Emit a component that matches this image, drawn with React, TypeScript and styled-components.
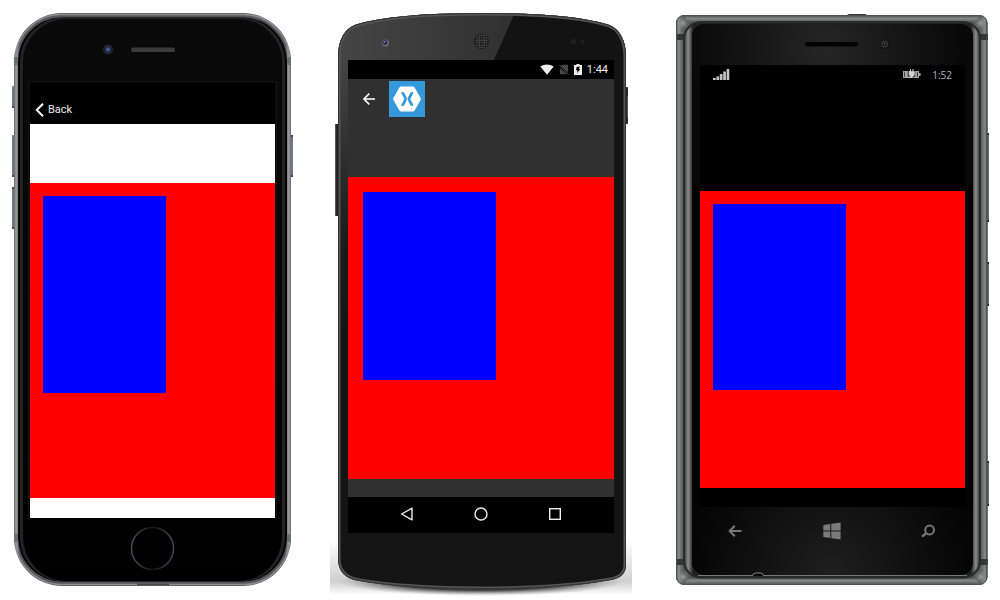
import React from "react";
import styled, { createGlobalStyle } from "styled-components";

const GlobalStyle = createGlobalStyle`
  *, *::before, *::after { box-sizing: border-box; }
  body { margin: 0; background: #fff; }
`;

const Gallery = styled.main`
  display: flex;
  flex-wrap: wrap;
  justify-content: space-between;
  padding: 0 10px 0 12px;
  overflow: hidden;
`;

const Device = styled.article<{ $width: number; $pad: string }>`
  position: relative;
  flex: 0 0 auto;
  width: ${(p) => p.$width}px;
  min-height: 600px;
  padding: ${(p) => p.$pad};
`;

const Shell = styled.svg`
  position: absolute;
  inset: 0;
  width: 100%;
  height: 600px;
`;

const Screen = styled.div<{ $background: string }>`
  position: relative;
  display: flex;
  flex-direction: column;
  background: ${(p) => p.$background};
`;

const IosNav = styled.header`
  display: flex;
  align-items: flex-end;
  height: 41px;
  padding: 0 5px 6px;
  background: #000;
`;

const IconButton = styled.button<{ $size: number }>`
  display: grid;
  place-items: center;
  width: ${(p) => p.$size}px;
  height: ${(p) => p.$size}px;
  padding: 0;
  border: 0;
  background: none;
  cursor: pointer;

  svg { display: block; }
`;

const BackButton = styled.button`
  display: flex;
  align-items: center;
  gap: 4px;
  padding: 0;
  border: 0;
  background: none;
  color: #eee;
  font: 400 11px/16px Roboto, "Liberation Sans", sans-serif;
  cursor: pointer;
`;

const StatusBar = styled.div<{ $height: number }>`
  display: flex;
  align-items: center;
  height: ${(p) => p.$height}px;
  background: #000;
`;

const AndroidStatus = styled(StatusBar)`
  justify-content: flex-end;
  gap: 5px;
  padding-right: 6px;
`;

const WindowsStatus = styled(StatusBar)`
  padding: 0 13px;
`;

const AndroidTime = styled.time`
  color: #eee;
  font: 400 11px/16px Roboto, sans-serif;
`;

const WindowsTime = styled.time`
  margin-left: 11px;
  color: #b5b5b5;
  font: 400 10px/16px "Open Sans", sans-serif;
`;

const Spring = styled.span`
  flex: 1;
`;

const ActionBar = styled.header`
  display: flex;
  align-items: center;
  gap: 8px;
  height: 40px;
  padding-left: 9px;
`;

const Gap = styled.div<{ $height: number }>`
  height: ${(p) => p.$height}px;
`;

const RedBox = styled.section<{ $height: number; $pad: number }>`
  height: ${(p) => p.$height}px;
  padding: ${(p) => p.$pad}px;
  background: #f00;
`;

const BlueBox = styled.div<{ $height: number; $width: number }>`
  width: ${(p) => p.$width}px;
  height: ${(p) => p.$height}px;
  background: #00f;
`;

const AndroidKeys = styled.nav`
  display: flex;
  align-items: center;
  justify-content: center;
  gap: 50px;
  height: 36px;
  padding-bottom: 2px;
  background: #000;
`;

const WindowsKeys = styled.nav`
  position: relative;
  display: flex;
  align-items: center;
  justify-content: space-between;
  height: 48px;
  padding: 0 25px 0 23px;
`;

const HomeRow = styled.div`
  position: relative;
  display: flex;
  justify-content: center;
  padding-top: 8px;
`;

function IphoneShell() {
  return (
    <Shell viewBox="12 0 282 600" aria-hidden="true">
      <defs>
        <linearGradient id="iosRim" x1="0" y1="0" x2="1" y2="0">
          <stop offset="0" stopColor="#5d5d63" />
          <stop offset=".009" stopColor="#99999f" />
          <stop offset=".02" stopColor="#55555a" />
          <stop offset=".98" stopColor="#55555a" />
          <stop offset=".991" stopColor="#99999f" />
          <stop offset="1" stopColor="#5d5d63" />
        </linearGradient>
        <linearGradient id="iosFace" x1="0" y1="0" x2="0" y2="1">
          <stop offset="0" stopColor="#0a0a0a" />
          <stop offset="1" stopColor="#000" />
        </linearGradient>
        <radialGradient id="iosLens">
          <stop offset="0" stopColor="#6078b8" />
          <stop offset=".5" stopColor="#253462" />
          <stop offset=".75" stopColor="#18191d" />
          <stop offset="1" stopColor="#39393b" />
        </radialGradient>
      </defs>
      <g fill="#77777e">
        <rect x="12" y="86" width="4" height="22" rx="1" />
        <rect x="12" y="135" width="4" height="42" rx="1" />
        <rect x="12" y="187" width="4" height="42" rx="1" />
        <rect x="289" y="135" width="4" height="42" rx="1" />
      </g>
      <path fill="#44444a" d="M12 106h3v2h-3zM12 175h3v2h-3zM12 187h3v2h-3zM12 227h3v2h-3zM290 135h3v2h-3zM290 175h3v2h-3z" />
      <rect x="14" y="13" width="277" height="573" rx="48" fill="url(#iosRim)" />
      <rect x="15.500" y="14.500" width="274" height="570" rx="46" fill="none" stroke="#8e8e95" strokeWidth="1.500" />
      <path d="M14 57h4v8h-4zM287 57h4v8h-4zM14 534h4v8h-4zM287 534h4v8h-4z" fill="#68716f" />
      <rect x="18" y="17.500" width="269" height="564" rx="44" fill="#050505" />
      <rect x="21.500" y="19" width="262" height="561" rx="43" fill="none" stroke="#232323" strokeWidth="3" />
      <rect x="24" y="19" width="257" height="562" rx="42" fill="url(#iosFace)" />
      <path d="M28.500 518V81.500H276.500V518" fill="none" stroke="#131313" />
      <circle cx="108" cy="49.500" r="4.800" fill="url(#iosLens)" />
      <rect x="131" y="47.500" width="44" height="4.500" rx="2.200" fill="#3b3b3b" />
      <path d="M137 584.500h32" stroke="#48484a" strokeWidth="1.500" />
    </Shell>
  );
}

function NexusShell() {
  const body =
    "M338 58Q338 31 356 24.500Q394 13 482 13Q570 13 608 24.500Q626 31 626 58V566Q625 579 607 580.500Q560 589 482 589Q404 589 357 580.500Q339 577 338 560Z";
  return (
    <Shell viewBox="330 0 302 600" aria-hidden="true">
      <defs>
        <linearGradient id="nexFace" x1="0" y1="0" x2="1" y2="0">
          <stop offset="0" stopColor="#454545" />
          <stop offset="1" stopColor="#303030" />
        </linearGradient>
        <linearGradient id="nexFade" x1="0" y1="0" x2="0" y2="1">
          <stop offset="0" stopColor="#151515" stopOpacity="0" />
          <stop offset=".7" stopColor="#151515" stopOpacity=".9" />
          <stop offset="1" stopColor="#151515" />
        </linearGradient>
        <radialGradient id="nexShadow">
          <stop offset="0" stopColor="#000" />
          <stop offset=".6" stopColor="#222" stopOpacity=".85" />
          <stop offset="1" stopColor="#888" stopOpacity="0" />
        </radialGradient>
        <linearGradient id="nexGlow" x1="0" y1="0" x2="0" y2="1">
          <stop offset="0" stopColor="#bbb" stopOpacity="0" />
          <stop offset=".75" stopColor="#bbb" stopOpacity=".7" />
          <stop offset="1" stopColor="#bbb" stopOpacity="0" />
        </linearGradient>
        <pattern id="nexMesh" width="2.400" height="2.400" patternUnits="userSpaceOnUse">
          <rect width="2.400" height="2.400" fill="#444" />
          <rect width="1.400" height="1.400" fill="#080808" />
        </pattern>
        <clipPath id="nexClip">
          <path d={body} />
        </clipPath>
      </defs>
      <rect x="330" y="540" width="302" height="55" fill="url(#nexGlow)" />
      <ellipse cx="481" cy="582" rx="142" ry="14" fill="url(#nexShadow)" />
      <rect x="335" y="124" width="5" height="92" rx="1" fill="#262626" />
      <path d="M335.500 125v90" stroke="#555" />
      <rect x="624" y="87" width="4" height="37" rx="1" fill="#262626" />
      <path d="M627.500 96v22" stroke="#555" />
      <path d={body} fill="#141414" />
      <g clipPath="url(#nexClip)">
        <path d="M338 13H515L494 60L482 76V330H338Z" fill="url(#nexFace)" />
        <path d="M338 60H482V330H338Z" fill="url(#nexFade)" />
        <path d="M513 17L494 60H626V13H513Z" fill="#131313" />
        <path d={body} fill="none" stroke="#555" strokeWidth="5" />
        <path d={body} fill="none" stroke="#343434" strokeWidth="2" />
      </g>
      <circle cx="385.500" cy="43" r="3.500" fill="#6c6c70" />
      <circle cx="385" cy="42.500" r="2.300" fill="#252040" />
      <circle cx="384.500" cy="42" r="1" fill="#7c78d0" />
      <circle cx="481.500" cy="41.500" r="7.300" fill="url(#nexMesh)" stroke="#202020" />
      <circle cx="573.500" cy="41.500" r="2.700" fill="#202020" />
      <circle cx="582.500" cy="41.500" r="2" fill="#202020" />
    </Shell>
  );
}

function LumiaShell() {
  return (
    <Shell viewBox="668 0 322 600" aria-hidden="true">
      <defs>
        <linearGradient id="lumRim" x1="0" y1="0" x2="1" y2="0">
          <stop offset="0" stopColor="#3c3f3e" />
          <stop offset=".008" stopColor="#8a8c8b" />
          <stop offset=".016" stopColor="#6a6e6c" />
          <stop offset=".026" stopColor="#515553" />
          <stop offset=".974" stopColor="#515553" />
          <stop offset=".984" stopColor="#6a6e6c" />
          <stop offset=".992" stopColor="#8a8c8b" />
          <stop offset="1" stopColor="#3c3f3e" />
        </linearGradient>
        <linearGradient id="lumBezel" x1="0" y1="0" x2="1" y2="0">
          <stop offset="0" stopColor="#303030" />
          <stop offset=".014" stopColor="#8c8c8c" />
          <stop offset=".03" stopColor="#222" />
          <stop offset=".97" stopColor="#222" />
          <stop offset=".986" stopColor="#8c8c8c" />
          <stop offset="1" stopColor="#303030" />
        </linearGradient>
        <linearGradient id="lumTop" x1="0" y1="0" x2="0" y2="1">
          <stop offset="0" stopColor="#454847" />
          <stop offset=".45" stopColor="#858987" />
          <stop offset="1" stopColor="#4b4f4d" />
        </linearGradient>
        <radialGradient id="lumCorner">
          <stop offset="0" stopColor="#b4b6b5" stopOpacity=".7" />
          <stop offset="1" stopColor="#8a8c8b" stopOpacity="0" />
        </radialGradient>
        <radialGradient id="lumSheenTop" cx="826" cy="48" r="140" gradientUnits="userSpaceOnUse">
          <stop offset="0" stopColor="#262626" />
          <stop offset="1" stopColor="#080808" />
        </radialGradient>
        <radialGradient id="lumSheenBottom" cx="831" cy="572" r="140" gradientUnits="userSpaceOnUse">
          <stop offset="0" stopColor="#1f1f1f" />
          <stop offset="1" stopColor="#050505" />
        </radialGradient>
        <clipPath id="lumFace">
          <rect x="692" y="24" width="281" height="551" rx="13" />
        </clipPath>
      </defs>
      <path d="M847 15l2-1h16l2 1z" fill="#333" />
      <path d="M986 133h3v89h-3zM986 262h3v44h-3zM986 461h3v45h-3z" fill="#6b6d6c" />
      <path d="M986 133h3v2h-3zM986 220h3v2h-3zM986 262h3v2h-3zM986 304h3v2h-3zM986 461h3v2h-3zM986 504h3v2h-3z" fill="#222" />
      <rect x="676" y="15" width="311.500" height="570" rx="8" fill="url(#lumRim)" />
      <path d="M683 15H981L974 23H690Z" fill="url(#lumTop)" />
      <path d="M690 577H974L981 585H683Z" fill="url(#lumTop)" />
      <g fill="url(#lumCorner)">
        <circle cx="683" cy="23" r="7" />
        <circle cx="980.500" cy="23" r="7" />
        <circle cx="683" cy="577" r="7" />
        <circle cx="980.500" cy="577" r="7" />
      </g>
      <path d="M676 34h8v6h-8zM980 34h8v6h-8zM676 559h8v6h-8zM980 559h8v6h-8z" fill="#343736" />
      <rect x="676.500" y="15.500" width="310.500" height="569" rx="8" fill="none" stroke="#4d504e" />
      <rect x="684" y="22" width="296" height="555.500" rx="17" fill="url(#lumBezel)" stroke="#292b2a" strokeWidth="2" />
      <rect x="692" y="24" width="281" height="551" rx="13" fill="#040404" />
      <g clipPath="url(#lumFace)">
        <rect x="691" y="24" width="283" height="160" fill="url(#lumSheenTop)" />
        <rect x="691" y="507" width="283" height="68" fill="url(#lumSheenBottom)" />
      </g>
      <path d="M698 575.500H967" stroke="#777" />
      <path d="M752 576q1-3 4-3h4q3 0 4 3" fill="#080808" stroke="#888" />
      <rect x="805" y="42" width="53" height="4.500" rx="2.200" fill="#020202" />
      <circle cx="885" cy="44.500" r="5.300" fill="#151515" />
      <circle cx="884.500" cy="44" r="3.500" fill="#363636" />
      <circle cx="884.500" cy="44" r="2" fill="#151515" />
      <path d="M884 43l1 1" stroke="#999" />
    </Shell>
  );
}

function Iphone() {
  return (
    <Device $width={282} $pad="83px 19px 0 18px">
      <IphoneShell />
      <Screen $background="#fff">
        <IosNav>
          <BackButton>
            <svg width="9" height="14" viewBox="0 0 9 14" fill="none" stroke="#fff" strokeWidth="2" aria-hidden="true">
              <path d="M8 .8L1.800 7L8 13.200" />
            </svg>
            Back
          </BackButton>
        </IosNav>
        <Gap $height={59} />
        <RedBox $height={315} $pad={13}>
          <BlueBox $width={123} $height={197} />
        </RedBox>
        <Gap $height={20} />
      </Screen>
      <HomeRow>
        <IconButton $size={44} aria-label="Home">
          <svg width="44" height="44" viewBox="0 0 44 44" fill="none" aria-hidden="true">
            <defs>
              <linearGradient id="homeRing" x1="0" y1="0" x2="1" y2="0">
                <stop offset="0" stopColor="#4d4d52" />
                <stop offset=".5" stopColor="#10161b" />
                <stop offset="1" stopColor="#48484d" />
              </linearGradient>
            </defs>
            <circle cx="21.500" cy="22.500" r="21" stroke="url(#homeRing)" strokeWidth="1.500" />
          </svg>
        </IconButton>
      </HomeRow>
    </Device>
  );
}

function Nexus() {
  return (
    <Device $width={302} $pad="60px 18px 0">
      <NexusShell />
      <Screen $background="#303030">
        <AndroidStatus $height={19}>
          <svg width="14" height="11" viewBox="0 0 14 11" aria-hidden="true">
            <path d="M.3 2.600Q7-1.800 13.700 2.600L7 10.800Z" fill="#eee" />
          </svg>
          <svg width="10" height="11" viewBox="0 0 10 11" aria-hidden="true">
            <path d="M3.500.8H9V8.500L2 2.300ZM1 4L8 10.300H1Z" fill="#484848" />
            <path d="M.4 1L9.600 10.600" stroke="#555" />
          </svg>
          <svg width="8" height="11" viewBox="0 0 8 11" aria-hidden="true">
            <path d="M2.500 0h3v1H8v10H0V1h2.500z" fill="#eee" />
            <path d="M2.700 2.800H6L4.800 5h1.500L3 9.200l.5-3H2z" fill="#000" />
          </svg>
          <AndroidTime>1:44</AndroidTime>
        </AndroidStatus>
        <ActionBar>
          <IconButton $size={24} aria-label="Navigate up">
            <svg width="12" height="12" viewBox="0 0 12 12" fill="none" stroke="#fff" strokeWidth="1.500" aria-hidden="true">
              <path d="M12 6H1M6.300.6L.9 6l5.400 5.400" />
            </svg>
          </IconButton>
          <svg width="36" height="36" viewBox="0 0 36 36" aria-hidden="true">
            <rect width="36" height="36" fill="#3498db" />
            <path d="M12.200 5.500h11.600q1.200 0 1.800 1l6 10.500q.6 1 0 2L25.600 29.500q-.6 1-1.800 1H12.200q-1.200 0-1.800-1L4.400 19q-.6-1 0-2l6-10.500q.6-1 1.800-1Z" fill="#fff" />
            <path d="M12 11.300h2.700q.3 0 .4.300l3 6 .4-.1 3-5.900q.1-.3.4-.3h2.400q.4 0 .2.500L21.200 18l3.300 6.200q.2.500-.2.500h-2.400q-.3 0-.4-.3l-3-5.900h-.4l-3 5.900q-.1.300-.4.300H12.300q-.4 0-.2-.500L15.400 18l-3.300-6.200q-.2-.4-.1-.5Z" fill="#3498db" />
            <path d="M17.400 17.600h1.400v.9h-1.400z" fill="#fff" />
          </svg>
        </ActionBar>
        <Gap $height={58} />
        <RedBox $height={302} $pad={15}>
          <BlueBox $width={133} $height={188} />
        </RedBox>
        <Gap $height={18} />
        <AndroidKeys>
          <IconButton $size={24} aria-label="Back">
            <svg width="14" height="14" viewBox="0 0 14 14" fill="none" stroke="#eee" strokeWidth="1.400" strokeLinejoin="round" aria-hidden="true">
              <path d="M12 1.200V12.800L1.700 7Z" />
            </svg>
          </IconButton>
          <IconButton $size={24} aria-label="Home">
            <svg width="14" height="14" viewBox="0 0 14 14" fill="none" stroke="#eee" strokeWidth="1.400" aria-hidden="true">
              <circle cx="7" cy="7" r="6" />
            </svg>
          </IconButton>
          <IconButton $size={24} aria-label="Overview">
            <svg width="14" height="14" viewBox="0 0 14 14" fill="none" stroke="#eee" strokeWidth="1.400" aria-hidden="true">
              <rect x="1.700" y="1.700" width="10.600" height="10.600" />
            </svg>
          </IconButton>
        </AndroidKeys>
      </Screen>
    </Device>
  );
}

function Lumia() {
  return (
    <Device $width={322} $pad="65px 25px 0 32px">
      <LumiaShell />
      <Screen $background="#000">
        <WindowsStatus $height={19}>
          <svg width="17" height="12" viewBox="0 0 17 12" fill="#c4c4c4" aria-hidden="true">
            <path d="M0 9h2.700v2H0zM3.400 7.400h2.700V11H3.400zM6.800 5h2.700v6H6.800zM10.200 2.600h2.700V11h-2.700zM13.600 0h2.700v11h-2.700z" />
          </svg>
          <Spring />
          <svg width="18" height="11" viewBox="0 0 18 11" aria-hidden="true">
            <path d="M0 2h16v7H0z" fill="#a2a2a2" />
            <path d="M16 4h1.600v3H16z" fill="#a2a2a2" />
            <path d="M1.200 3.200h.8v4.600h-.8zM14 3.200h.8v4.600H14zM4.800 2h.9v4.500l2 1.700H5.500V7.300H4.800zM12.200 2h-.9v4.500l-2 1.700h2.200V7.300h.7z" fill="#222" />
            <path d="M7 0h1v2.500h1.500V0h1v2.500h1.200v3L10 7.500H9.200V9H5.500V8h2.200V7.500L6 5.500v-3h1z" fill="#d2d2d2" />
          </svg>
          <WindowsTime>1:52</WindowsTime>
        </WindowsStatus>
        <Gap $height={107} />
        <RedBox $height={297} $pad={13}>
          <BlueBox $width={133} $height={186} />
        </RedBox>
        <Gap $height={19} />
      </Screen>
      <WindowsKeys>
        <IconButton $size={24} aria-label="Back">
          <svg width="14" height="12" viewBox="0 0 14 12" fill="none" stroke="#777" strokeWidth="2" aria-hidden="true">
            <path d="M13.500 6H2M6.800.8L1.600 6l5.200 5.200" />
          </svg>
        </IconButton>
        <IconButton $size={24} aria-label="Start">
          <svg width="18" height="18" viewBox="0 0 18 18" fill="#7a7a7a" aria-hidden="true">
            <path d="M.3 3.100L7.300 2v6.500h-7zM8.300 1.800L17.600.5v8H8.300zM.3 9.500h7V16l-7-1zM8.300 9.500h9.300v8l-9.300-1.300z" />
          </svg>
        </IconButton>
        <IconButton $size={24} aria-label="Search">
          <svg width="14" height="14" viewBox="0 0 14 14" fill="none" stroke="#777" strokeWidth="2" aria-hidden="true">
            <circle cx="8.600" cy="6" r="4.400" />
            <path d="M5.400 9.100L1 12.600" strokeWidth="2.400" />
          </svg>
        </IconButton>
      </WindowsKeys>
    </Device>
  );
}

export default function App() {
  return (
    <>
      <GlobalStyle />
      <Gallery>
        <Iphone />
        <Nexus />
        <Lumia />
      </Gallery>
    </>
  );
}
